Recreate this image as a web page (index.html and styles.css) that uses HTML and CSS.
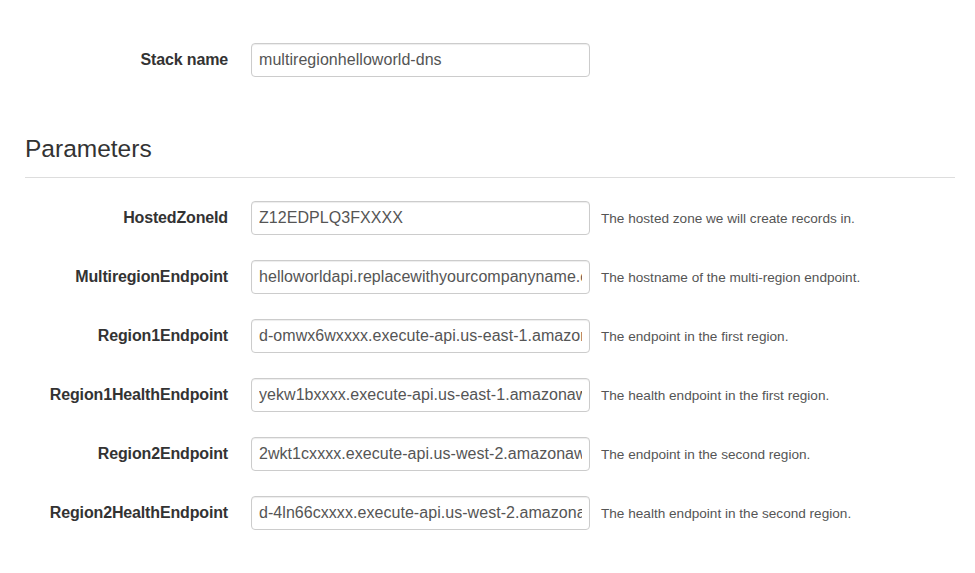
FILE: index.html
```html
<!DOCTYPE html>
<html>
<head>
<meta charset="utf-8">
<title>Stack parameters</title>
<link rel="stylesheet" href="styles.css">
</head>
<body>
<div class="page">
  <div class="form-row stack-row">
    <label class="field-label">Stack name</label>
    <input class="field-input" type="text" value="multiregionhelloworld-dns">
  </div>

  <h2 class="section-title">Parameters</h2>

  <div class="params">
    <div class="form-row">
      <label class="field-label">HostedZoneId</label>
      <input class="field-input" type="text" value="Z12EDPLQ3FXXXX">
      <span class="field-help">The hosted zone we will create records in.</span>
    </div>
    <div class="form-row">
      <label class="field-label">MultiregionEndpoint</label>
      <input class="field-input" type="text" value="helloworldapi.replacewithyourcompanyname.com">
      <span class="field-help">The hostname of the multi-region endpoint.</span>
    </div>
    <div class="form-row">
      <label class="field-label">Region1Endpoint</label>
      <input class="field-input" type="text" value="d-omwx6wxxxx.execute-api.us-east-1.amazonaws.com">
      <span class="field-help">The endpoint in the first region.</span>
    </div>
    <div class="form-row">
      <label class="field-label">Region1HealthEndpoint</label>
      <input class="field-input" type="text" value="yekw1bxxxx.execute-api.us-east-1.amazonaws.com">
      <span class="field-help">The health endpoint in the first region.</span>
    </div>
    <div class="form-row">
      <label class="field-label">Region2Endpoint</label>
      <input class="field-input" type="text" value="2wkt1cxxxx.execute-api.us-west-2.amazonaws.com">
      <span class="field-help">The endpoint in the second region.</span>
    </div>
    <div class="form-row">
      <label class="field-label">Region2HealthEndpoint</label>
      <input class="field-input" type="text" value="d-4ln66cxxxx.execute-api.us-west-2.amazonaws.com">
      <span class="field-help">The health endpoint in the second region.</span>
    </div>
  </div>
</div>
</body>
</html>
```

FILE: styles.css
```css
html, body {
  margin: 0;
  padding: 0;
  background: #ffffff;
}

body {
  font-family: "Liberation Sans", Arial, Helvetica, sans-serif;
  color: #333333;
}

.page {
  padding: 43px 20px 0 25px;
}

.form-row {
  display: grid;
  grid-template-columns: 203px 339px auto;
  align-items: center;
}

.field-label {
  grid-column: 1;
  font-size: 16px;
  font-weight: bold;
  letter-spacing: -0.15px;
  text-align: right;
  padding-right: 23px;
  margin-right: -23px;
  color: #333333;
}

.field-input {
  grid-column: 2;
  margin-left: 23px;
  width: 339px;
  height: 34px;
  box-sizing: border-box;
  border: 1px solid #cccccc;
  border-radius: 4px;
  box-shadow: inset 0 1px 1px rgba(0, 0, 0, 0.075);
  padding: 0 7px;
  font-family: "Liberation Sans", Arial, Helvetica, sans-serif;
  font-size: 16px;
  letter-spacing: 0.05px;
  color: #555555;
  background: #ffffff;
  outline: none;
}

.field-help {
  grid-column: 3;
  margin-left: 34px;
  font-size: 13.6px;
  color: #555555;
  white-space: nowrap;
}

.section-title {
  margin: 59px 0 0 0;
  font-size: 24.5px;
  font-weight: normal;
  line-height: 26px;
  color: #333333;
  padding-bottom: 15px;
  border-bottom: 1px solid #dddddd;
}

.params {
  padding-top: 23px;
  display: flex;
  flex-direction: column;
  gap: 25px;
}
```
